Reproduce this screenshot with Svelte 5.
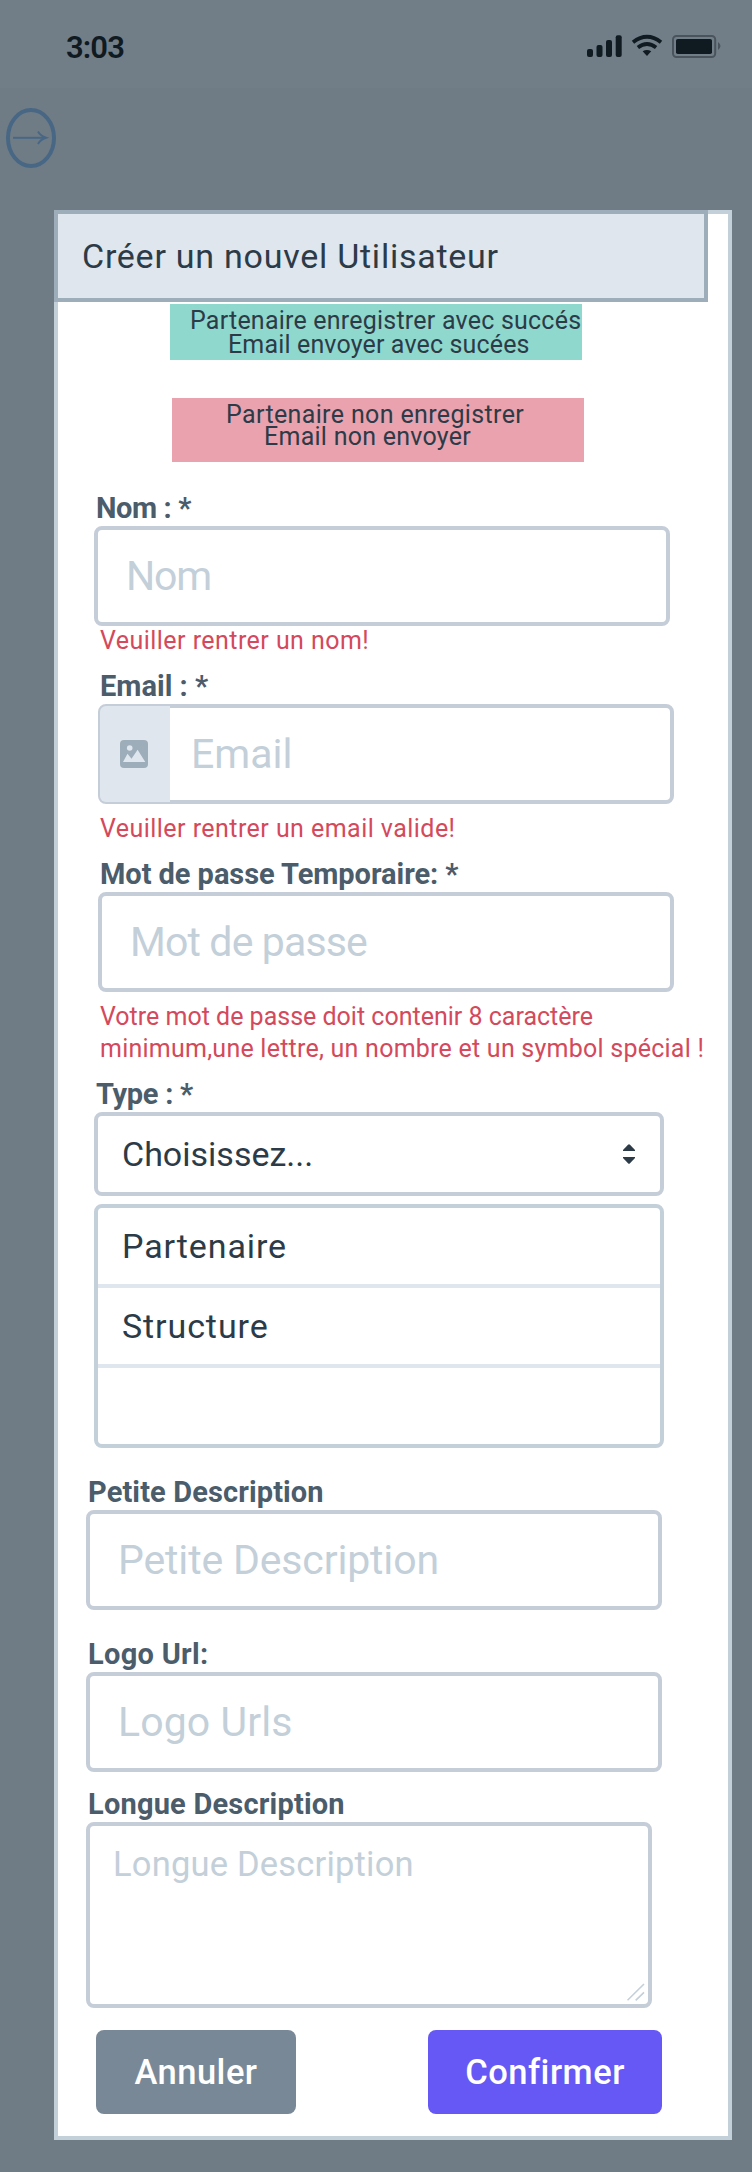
<script>
  const alerts = [
    { kind: 'success', lines: [{ text: 'Partenaire enregistrer avec succés', indent: 20, track: 0.22 }, { text: 'Email envoyer avec sucées', indent: 58, track: 0.15 }] },
    { kind: 'danger', lines: [{ text: 'Partenaire non enregistrer', indent: 54, track: 0.36 }, { text: 'Email non envoyer', indent: 92, track: 0.26 }] }
  ];
  const options = ['Partenaire', 'Structure', ''];
</script>

{#snippet field(label, placeholder, shift, track, labelTrack, icon = false)}
  <div class="field {shift}">
    <div class="label" style:letter-spacing="{labelTrack}px">{label}</div>
    <div class="input" class:with-icon={icon}>
      {#if icon}
        <span class="prefix">
          <svg width="28" height="28" viewBox="0 0 28 28">
            <rect width="28" height="28" rx="4" fill="#9eadba" />
            <circle cx="9.7" cy="8" r="2.8" fill="#dfe6ee" />
            <path d="M3 22 7.5 13.7 11.5 18.8 17.6 9.7 25.3 22Z" fill="#dfe6ee" />
          </svg>
        </span>
      {/if}
      <span style:letter-spacing="{track}px">{placeholder}</span>
    </div>
  </div>
{/snippet}

<div class="screen">
  <header class="status">
    <span class="time">3:03</span>
    <svg class="indicators" width="136" height="26" viewBox="586 34 136 26">
      <g fill="#101a21">
        <rect x="587" y="49" width="6" height="8" rx="2" />
        <rect x="596.5" y="45" width="6" height="12" rx="2" />
        <rect x="606" y="40" width="6" height="17" rx="2" />
        <rect x="615.7" y="35.2" width="6" height="21.8" rx="2" />
        <path d="M642.6 51.2Q647 48.7 651.2 51.2L647 56Z" />
        <rect x="676" y="39" width="36" height="15" rx="1.8" />
      </g>
      <g fill="none" stroke="#101a21" stroke-width="3.8">
        <path d="M633 42.3Q647 31.3 661 42.3" />
        <path d="M637.9 47.4Q647 40.6 656.1 47.4" />
      </g>
      <rect x="673" y="36" width="42.2" height="21" rx="3.5" fill="none" stroke="#4a545d" stroke-width="2" />
      <path d="M718 42Q723 46 718 50Z" fill="#4a545d" />
    </svg>
  </header>

  <svg class="back" width="50" height="60" viewBox="0 0 50 60" fill="none" stroke="#486785">
    <ellipse cx="25" cy="30" rx="23" ry="28" stroke-width="4" />
    <path d="M7 29.8H39" stroke-width="2" />
    <path d="M32 23.5Q34.5 28 40 29.8Q34.5 31.5 32 36" stroke-width="2" />
  </svg>

  <main class="modal">
    <h1>Créer un nouvel Utilisateur</h1>

    {#each alerts as alert}
      <div class="alert {alert.kind}">
        {#each alert.lines as line}
          <div style:padding-left="{line.indent}px" style:letter-spacing="{line.track}px">{line.text}</div>
        {/each}
      </div>
    {/each}

    {@render field('Nom : *', 'Nom', 'nom', -1.2, -0.4)}
    <p class="error close">Veuiller rentrer un nom!</p>

    {@render field('Email : *', 'Email', 'inset', 0, 0, true)}
    <p class="error">Veuiller rentrer un email valide!</p>

    {@render field('Mot de passe Temporaire: *', 'Mot de passe', 'inset', -0.85, -0.05)}
    <p class="error long"><span>Votre mot de passe doit contenir 8 caractère</span><br />minimum,une lettre, un nombre et un symbol spécial !</p>

    <div class="type">
      <div class="label">Type : *</div>
      <div class="select">
        <span>Choisissez...</span>
        <svg width="12" height="20" viewBox="0 0 12 20" fill="#2c3b47">
          <path d="M0 7V6L5 .7Q6-.3 7 .7L12 6V7Z" />
          <path d="M0 13V14L5 19.3Q6 20.3 7 19.3L12 14V13Z" />
        </svg>
      </div>
      <div class="options">
        {#each options as option}
          <div class="option">{option}</div>
        {/each}
      </div>
    </div>

    {@render field('Petite Description', 'Petite Description', 'outset wide-gap', -0.15, 0.12)}
    {@render field('Logo Url:', 'Logo Urls', 'outset wide-gap', 0.1, 0.3)}

    <div class="field outset long-text">
      <div class="label">Longue Description</div>
      <div class="textarea">
        <span>Longue Description</span>
        <svg class="grip" width="18" height="18" viewBox="0 0 18 18" stroke="#c3cfd9" stroke-width="1.6">
          <path d="M.5 17.3 17 1M8.7 17.3 17 9.3" />
        </svg>
      </div>
    </div>

    <footer>
      <button class="cancel">Annuler</button>
      <button class="confirm">Confirmer</button>
    </footer>
  </main>
</div>

<style>
  :global(body) { margin: 0; background: #6f7c86; }
  .screen, .screen * { box-sizing: border-box; }
  .screen {
    width: 752px;
    height: 2172px;
    background: #6f7c86;
    font-family: Roboto, "Liberation Sans", sans-serif;
    color: #2c3b47;
    white-space: nowrap;
  }
  .status {
    height: 88px;
    padding: 34px 30px 0 66px;
    background: #717e88;
    display: flex;
    justify-content: space-between;
    align-items: flex-start;
  }
  .time {
    font-size: 31px;
    line-height: 27px;
    font-weight: 600;
    letter-spacing: -0.9px;
    color: #101a21;
  }
  .back { display: block; margin: 20px 0 0 6px; }

  .modal {
    width: 678px;
    height: 1930px;
    margin: 42px 0 0 54px;
    background: #fff;
    border: 4px solid #c3cfd9;
    display: flex;
    flex-direction: column;
  }
  h1 {
    margin: -4px 0 0 -4px;
    width: 654px;
    height: 92px;
    flex: none;
    padding: 1px 0 0 24px;
    border: 4px solid #9eadba;
    background: #dfe6ee;
    font-size: 34px;
    font-weight: 400;
    line-height: 82px;
    letter-spacing: 0.75px;
  }
  .alert { width: 412px; font-size: 25px; flex: none; }
  .success {
    height: 56px;
    margin: 2px 0 0 112px;
    padding-top: 5px;
    line-height: 24px;
    background: #8fd8ce;
  }
  .danger {
    height: 64px;
    margin: 38px 0 0 114px;
    padding-top: 6px;
    line-height: 22px;
    background: #e9a2ae;
  }

  .field { width: 576px; margin: 14px 0 0 36px; }
  .field.nom { margin-top: 30px; }
  .field.inset { margin-left: 40px; }
  .field.outset { margin-left: 28px; }
  .field.wide-gap { margin-top: 28px; }
  .field.long-text { margin-top: 16px; }
  .label {
    height: 32px;
    margin-bottom: 2px;
    padding-left: 2px;
    font-size: 29px;
    line-height: 32px;
    font-weight: 700;
    color: #4b5c6b;
  }
  .type .label { letter-spacing: -0.3px; }
  .long-text .label { letter-spacing: 0.2px; }
  .input {
    height: 100px;
    padding-left: 28px;
    border: 4px solid #c5cdd8;
    border-radius: 8px;
    display: flex;
    align-items: center;
    font-size: 41px;
    line-height: 48px;
    color: #c3cfd9;
  }
  .with-icon { padding-left: 0; }
  .prefix {
    width: 70px;
    height: 96px;
    margin: -2px 21px -2px -2px;
    border-radius: 6px 0 0 6px;
    background: #dfe6ee;
    display: flex;
    align-items: center;
    padding-left: 20px;
  }
  .error {
    margin: 9px 0 -1px 42px;
    font-size: 25px;
    line-height: 32px;
    letter-spacing: 0.45px;
    color: #d4495b;
  }
  .error.close { margin-top: -1px; }
  .error.long { letter-spacing: 0.24px; }
  .error.long span { letter-spacing: 0; }

  .type { width: 570px; margin: 14px 0 0 36px; font-size: 34px; }
  .select {
    height: 84px;
    padding: 0 25px 0 24px;
    border: 4px solid #c5cdd8;
    border-radius: 8px;
    display: flex;
    align-items: center;
    justify-content: space-between;
  }
  .options {
    height: 244px;
    margin-top: 8px;
    border: 4px solid #c3cfd9;
    border-radius: 8px;
  }
  .option {
    height: 80px;
    padding-left: 24px;
    line-height: 76px;
    letter-spacing: 0.9px;
    border-bottom: 4px solid #dfe6ee;
  }
  .option:last-child { height: 76px; border: 0; }

  .textarea {
    position: relative;
    width: 566px;
    height: 186px;
    padding: 18px 0 0 23px;
    border: 4px solid #c5cdd8;
    border-radius: 8px;
    font-size: 34.5px;
    line-height: 40px;
    letter-spacing: 0.2px;
    color: #c3cfd9;
  }
  .grip { position: absolute; right: 3px; bottom: 3px; }
  footer {
    width: 566px;
    margin: 22px 0 0 38px;
    display: flex;
    justify-content: space-between;
  }
  button {
    height: 84px;
    padding: 0;
    border: 0;
    border-radius: 8px;
    color: #fff;
    font: 500 34.5px/84px Roboto, "Liberation Sans", sans-serif;
    letter-spacing: 0.5px;
  }
  .cancel { width: 200px; background: #798897; }
  .confirm { width: 234px; background: #6558f5; }
</style>
